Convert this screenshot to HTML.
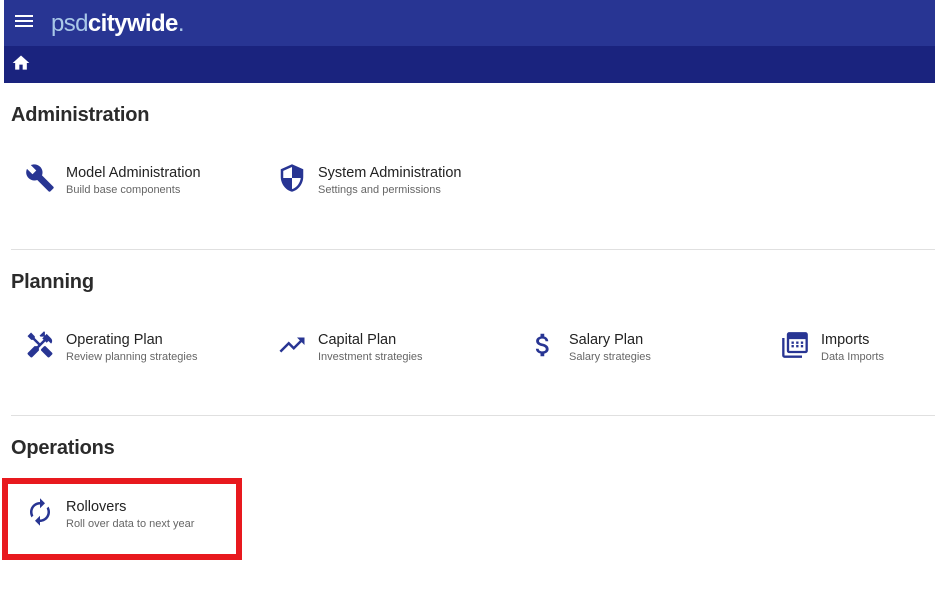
<!DOCTYPE html>
<html><head><style>
body{margin:0;width:935px;height:598px;background:#fff;font-family:"Liberation Sans",Arial,sans-serif;position:relative;overflow:hidden}
.a{position:absolute}
.h{left:4px;top:0;width:931px;height:46px;background:#283593}
.n{left:4px;top:46px;width:931px;height:37px;background:#1a237e}
.sec{left:11px;font-size:20px;color:#2b2b2b;font-weight:bold;letter-spacing:-0.2px}
.hr{left:11px;width:924px;height:1px;background:#e0e0e0}
.t{font-size:14.5px;color:#222}
.s{font-size:11px;color:#666;margin-top:3px}
svg.i{position:absolute;width:30px;height:30px;fill:#283593}
</style></head><body>
<div class="a h"></div>
<div class="a n"></div>
<svg class="a" style="left:15px;top:14px" width="18" height="14" viewBox="0 0 18 14"><rect y="1" width="18" height="2" fill="#fff"/><rect y="6" width="18" height="2" fill="#fff"/><rect y="11" width="18" height="2" fill="#fff"/></svg>
<div class="a" style="left:51px;top:11px;font-size:24px;letter-spacing:-0.6px;line-height:26px"><span style="color:#a9c8e8">psd</span><span style="color:#fff;font-weight:bold">citywide</span><span style="color:#a9c8e8">.</span></div>
<svg class="a" style="left:11px;top:53px" width="20" height="20" viewBox="0 0 24 24"><path fill="#fff" d="M10 20v-6h4v6h5v-8h3L12 3 2 12h3v8z"/></svg>

<div class="a sec" style="top:104px">Administration</div>
<svg class="i" style="left:25px;top:163px" viewBox="0 0 24 24"><path d="M22.7 19l-9.1-9.1c.9-2.3.4-5-1.5-6.9-2-2-5-2.4-7.4-1.3L9 6 6 9 1.6 4.7C.4 7.1.9 10.1 2.9 12.1c1.9 1.9 4.6 2.4 6.9 1.5l9.1 9.1c.4.4 1 .4 1.4 0l2.3-2.3c.5-.4.5-1.1.1-1.4z"/></svg>
<div class="a" style="left:66px;top:165px"><div class="t">Model Administration</div><div class="s">Build base components</div></div>
<svg class="i" style="left:277px;top:163px" viewBox="0 0 24 24"><path d="M12 1L3 5v6c0 5.55 3.84 10.74 9 12 5.16-1.26 9-6.45 9-12V5l-9-4zm0 10.99h7c-.53 4.12-3.28 7.79-7 8.94V12H5V6.3l7-3.11v8.8z"/></svg>
<div class="a" style="left:318px;top:165px"><div class="t">System Administration</div><div class="s">Settings and permissions</div></div>
<div class="a hr" style="top:249px"></div>

<div class="a sec" style="top:271px">Planning</div>
<svg class="i" style="left:25px;top:330px" viewBox="0 0 24 24"><path d="M21.67 18.17l-5.3-5.3h-.99l-2.54 2.54v.99l5.3 5.3c.39.39 1.02.39 1.41 0l2.12-2.12c.39-.38.39-1.02 0-1.41zM17.34 10.19l1.41-1.41 2.12 2.12a3 3 0 000-4.240l-3.54-3.54-1.41 1.41V1.71l-.7-.71-3.54 3.54.71.71h2.83l-1.41 1.41 1.06 1.06-2.89 2.89-4.13-4.13V5.06L4.83 2.04 2 4.87 5.03 7.9h1.41l4.13 4.130-.85.85H7.6l-5.3 5.3a.996.996 0 000 1.41l2.12 2.12c.39.39 1.02.39 1.41 0l5.3-5.3v-2.12l5.15-5.15 1.06 1.05z"/></svg>
<div class="a" style="left:66px;top:332px"><div class="t">Operating Plan</div><div class="s">Review planning strategies</div></div>
<svg class="i" style="left:277px;top:330px" viewBox="0 0 24 24"><path d="M16 6l2.29 2.29-4.88 4.88-4-4L2 16.59 3.41 18l6-6 4 4 6.3-6.29L22 12V6z"/></svg>
<div class="a" style="left:318px;top:332px"><div class="t">Capital Plan</div><div class="s">Investment strategies</div></div>
<svg class="i" style="left:528px;top:330px" viewBox="0 0 24 24"><path d="M11.8 10.9c-2.27-.59-3-1.2-3-2.15 0-1.09 1.01-1.850 2.7-1.85 1.78 0 2.44.85 2.5 2.1h2.21c-.07-1.72-1.12-3.3-3.21-3.81V3h-3v2.16c-1.94.42-3.5 1.68-3.5 3.61 0 2.31 1.91 3.46 4.7 4.13 2.5.6 3 1.48 3 2.41 0 .69-.49 1.79-2.7 1.79-2.06 0-2.87-.92-2.98-2.1h-2.2c.12 2.19 1.76 3.42 3.68 3.83V21h3v-2.15c1.95-.37 3.5-1.5 3.5-3.55 0-2.84-2.43-3.81-4.7-4.4z"/></svg>
<div class="a" style="left:569px;top:332px"><div class="t">Salary Plan</div><div class="s">Salary strategies</div></div>
<svg class="i" style="left:781px;top:331px;width:28px;height:28px" viewBox="0 0 24 24"><path d="M3 6H1v15a2 2 0 002 2h15v-2H3V6zm18-5H7a2 2 0 00-2 2v14a2 2 0 002 2h14a2 2 0 002-2V3a2 2 0 00-2-2zm0 16H7V7h14v10zM9 9h2v2H9zm4 0h2v2h-2zm4 0h2v2h-2zM9 12h2v2H9zm4 0h2v2h-2zm4 0h2v2h-2z"/></svg>
<div class="a" style="left:821px;top:332px"><div class="t">Imports</div><div class="s">Data Imports</div></div>
<div class="a hr" style="top:415px"></div>

<div class="a sec" style="top:437px">Operations</div>
<svg class="i" style="left:25px;top:497px" viewBox="0 0 24 24"><path d="M12 6v3l4-4-4-4v3c-4.42 0-8 3.58-8 8 0 1.57.46 3.03 1.24 4.26L6.7 14.8A5.87 5.87 0 016 12c0-3.31 2.69-6 6-6zm6.76 1.74L17.3 9.2c.44.84.7 1.79.7 2.8 0 3.31-2.69 6-6 6v-3l-4 4 4 4v-3c4.42 0 8-3.58 8-8 0-1.57-.46-3.03-1.24-4.26z"/></svg>
<div class="a" style="left:66px;top:499px"><div class="t">Rollovers</div><div class="s">Roll over data to next year</div></div>
<div class="a" style="left:2px;top:478px;width:228px;height:70px;border:6px solid #e8191e"></div>
</body></html>
